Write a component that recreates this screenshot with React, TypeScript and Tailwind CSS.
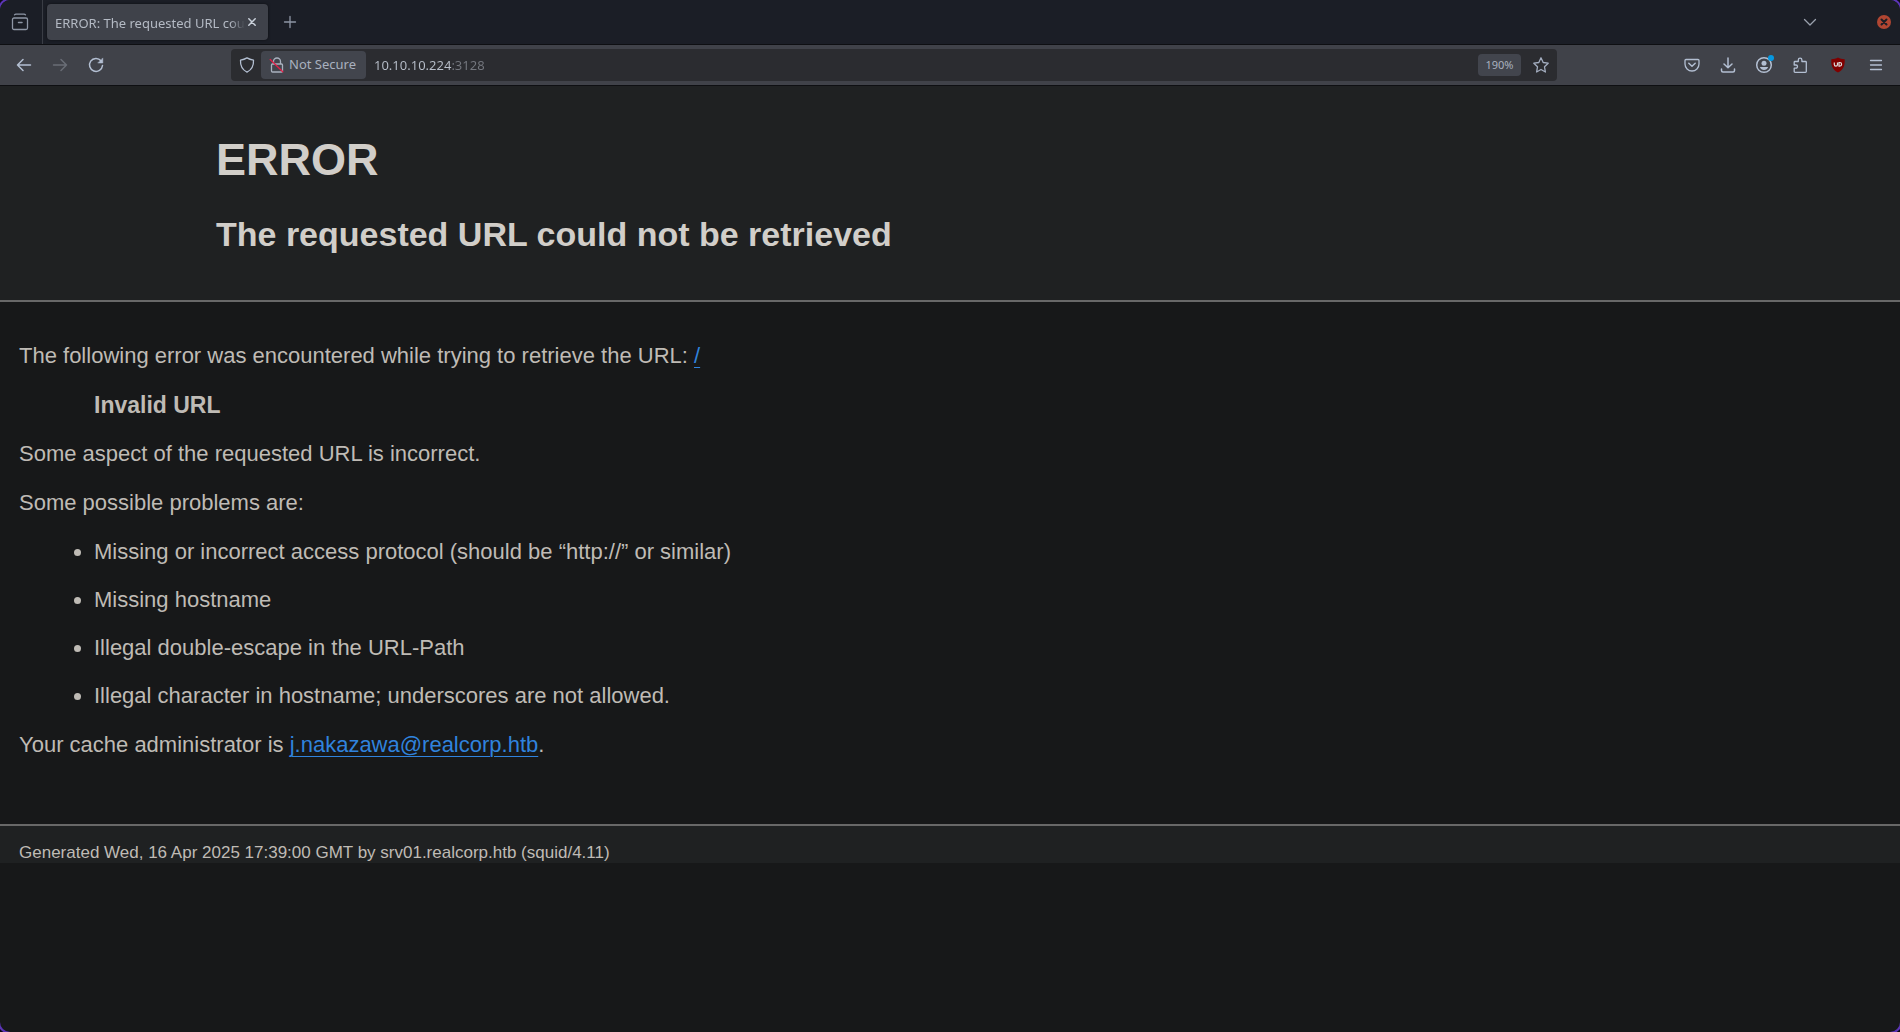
import type { ReactNode } from 'react';

const problems = [
  'Missing or incorrect access protocol (should be “http://” or similar)',
  'Missing hostname',
  'Illegal double-escape in the URL-Path',
  'Illegal character in hostname; underscores are not allowed.',
];

function Icon({ children, size = 16 }: { children: ReactNode; size?: number }) {
  return (
    <svg
      width={size}
      height={size}
      viewBox={`0 0 ${size} ${size}`}
      fill="none"
      stroke="currentColor"
      strokeWidth="1.3"
      strokeLinecap="round"
      strokeLinejoin="round"
      aria-hidden="true"
      className="shrink-0"
    >
      {children}
    </svg>
  );
}

function IconButton({ label, className = 'w-9', children }: { label: string; className?: string; children: ReactNode }) {
  return (
    <button type="button" aria-label={label} className={`flex h-8 items-center justify-center ${className}`}>
      {children}
    </button>
  );
}

function TabBar() {
  return (
    <div className="flex h-11 items-stretch bg-[#1b1e26]">
      <div className="flex w-[43px] items-center justify-center border-r border-[#3a3d45] text-[#8e96a5]">
        <button type="button" aria-label="View recent browsing" className="pr-0.5">
          <Icon size={18}>
            <path d="M3.500 1.800Q4 1.200 5 1.200h8q1 0 1.500.6" />
            <rect x="1.500" y="5" width="15" height="11.500" rx="1.500" />
            <path d="M7.500 9.500h3.500" strokeWidth="1.500" />
          </Icon>
        </button>
      </div>
      <div className="my-1 ml-1 flex w-[221px] items-center rounded bg-[#3f424a] pl-2 text-[#b4bac4] shadow-[0_0_3px_#0008]">
        <span className="w-[190px] overflow-hidden whitespace-nowrap pt-0.5 text-[13px] leading-5 [mask-image:linear-gradient(to_right,#000_92%,transparent)]">
          ERROR: The requested URL could not be retrieved
        </span>
        <button type="button" aria-label="Close tab" className="ml-[3px] text-[#cbd2dc]">
          <Icon size={8}>
            <path d="M.8.8l6.400 6.400M7.200.8L.8 7.200" strokeWidth="1.500" />
          </Icon>
        </button>
      </div>
      <IconButton label="New tab" className="ml-1 w-9 self-center text-[#8e96a5]">
        <Icon size={14}>
          <path d="M7 1.500v11M1.500 7h11" />
        </Icon>
      </IconButton>
      <div className="flex-1" />
      <IconButton label="List all tabs" className="w-9 self-center text-[#9aa1ad]">
        <Icon size={14}>
          <path d="M1.500 4.500L7 10l5.500-5.500" />
        </Icon>
      </IconButton>
      <IconButton label="Close window" className="ml-10 w-8 self-center">
        <svg width="14" height="14" viewBox="0 0 14 14" aria-hidden="true">
          <circle cx="7" cy="7" r="7" fill="#b04632" />
          <path d="M4.500 4.500l5 5m0-5l-5 5" stroke="#1b1e26" strokeWidth="2" strokeLinecap="round" />
        </svg>
      </IconButton>
    </div>
  );
}

function Toolbar() {
  return (
    <div className="flex h-[42px] items-center border-y border-[#0e0f12] bg-[#404249] px-1.5 text-[#b3bfd2]">
      <IconButton label="Back">
        <Icon>
          <path d="M14.500 8h-13M7 2.500L1.500 8 7 13.500" strokeWidth="1.500" />
        </Icon>
      </IconButton>
      <IconButton label="Forward" className="w-9 text-[#696d76]">
        <Icon>
          <path d="M1.500 8h13M9 2.500L14.500 8 9 13.500" strokeWidth="1.500" />
        </Icon>
      </IconButton>
      <IconButton label="Reload">
        <Icon>
          <path d="M13 3.700A6.500 6.500 0 1 0 14.500 8.500" strokeWidth="1.500" />
          <path d="M14.800 1.300v4.700H10.100z" fill="currentColor" strokeWidth=".5" />
        </Icon>
      </IconButton>
      <div className="min-w-4 max-w-[117px] flex-1" />
      <div className="flex h-8 w-[1326px] shrink items-center rounded bg-[#2b2c30]">
        <button type="button" aria-label="Tracking protection" className="flex w-[30px] justify-center pl-0.5">
          <Icon>
            <path d="M8 .9c2 1.300 4 1.900 6.500 2.200.3 5.400-1.800 9.700-6.500 12-4.700-2.300-6.800-6.600-6.500-12C4 2.800 6 2.200 8 .9z" />
          </Icon>
        </button>
        <button
          type="button"
          className="flex h-7 w-[105px] shrink-0 items-center gap-1 whitespace-nowrap rounded bg-[#42454d] pl-2 text-[13px] text-[#a9b1bf]"
        >
          <Icon>
            <path d="M4.500 7V4.500a3.500 3.500 0 0 1 7 0V7M4 7h8.500q1 0 1 1v6q0 1-1 1h-9q-1 0-1-1V8q0-1 1-1z" />
            <path d="M1.200 2.500l12.600 12.300" stroke="#e21f48" />
          </Icon>
          Not Secure
        </button>
        <input
          aria-label="Address"
          defaultValue="10.10.10.224:3128"
          className="ml-2 min-w-0 flex-1 bg-[linear-gradient(to_right,#b8bfca_78px,#74777e_78px)] bg-clip-text text-[13px] leading-5 text-transparent outline-none"
        />
        <button type="button" className="mr-2 h-[22px] w-[43px] shrink-0 rounded-sm bg-[#42454d] text-[11px] text-[#a9b1bf]">
          190%
        </button>
        <button type="button" aria-label="Bookmark this page" className="mr-1 flex w-6 justify-center text-[#a3adbf]">
          <Icon>
            <path d="M8 .8l2.200 4.700 5 .7-3.700 3.600.9 5.200L8 12.500 3.600 15l.9-5.200L.8 6.200l5-.7z" />
          </Icon>
        </button>
      </div>
      <div className="flex-1" />
      <IconButton label="Save to Pocket">
        <Icon>
          <path d="M2 2.500h12q1 0 1 1V7A7 7 0 0 1 1 7V3.500q0-1 1-1z" />
          <path d="M4.800 6.300L8 9.300l3.200-3" strokeWidth="1.500" />
        </Icon>
      </IconButton>
      <IconButton label="Downloads">
        <Icon>
          <path d="M8 1v9.500M4 7l4 3.800L12 7M1.500 12v1.500q0 1.500 1.500 1.500h10q1.500 0 1.500-1.500V12" strokeWidth="1.500" />
        </Icon>
      </IconButton>
      <IconButton label="Account">
        <Icon size={20}>
          <circle cx="10" cy="10" r="7.300" strokeWidth="1.500" />
          <circle cx="10" cy="8.300" r="2.500" fill="currentColor" stroke="none" />
          <path d="M5.800 12h8.400q-1.200 3-4.200 3t-4.200-3z" fill="currentColor" stroke="none" />
          <circle cx="17" cy="3" r="3" fill="#0698e0" stroke="none" />
        </Icon>
      </IconButton>
      <IconButton label="Extensions">
        <Icon>
          <path d="M6.300 4.500V3a1.800 1.800 0 0 1 3.600 0v1.500h3.600q.8 0 .8.800v9.200q0 .8-.8.800H3q-.8 0-.8-.8v-3.300h1.700a1.600 1.600 0 0 0 0-3.200H2.200V5.300q0-.8.800-.8z" />
        </Icon>
      </IconButton>
      <IconButton label="uBlock Origin" className="ml-0.5 w-9">
        <svg width="16" height="16" viewBox="0 0 16 16" aria-hidden="true">
          <path d="M8 .5c2 1.300 4 1.700 6.700 1.700C15 9 13.500 12.500 8 15.500 2.500 12.500 1 9 1.300 2.200 4 2.200 6 1.800 8 .5z" fill="#800000" />
          <path d="M4.300 5.500v2a1.600 1.600 0 0 0 3.200 0v-2M9 5.500v3.600h.8a1.800 1.800 0 0 0 0-3.600z" fill="none" stroke="#ddd" strokeWidth="1.200" />
        </svg>
      </IconButton>
      <IconButton label="Open application menu" className="ml-0.5 w-9">
        <Icon>
          <path d="M2.500 3.500h11M2.500 8h11M2.500 12.500h11" />
        </Icon>
      </IconButton>
    </div>
  );
}

export default function App() {
  return (
    <div className="min-h-screen bg-[#0d0b14]">
      <div className="flex min-h-screen flex-col overflow-hidden rounded-[10px] bg-[#171819] font-['Noto_Sans',sans-serif] shadow-[0_0_0_2px_#5b35b5]">
        <TabBar />
        <Toolbar />
        <main className="font-['Liberation_Sans',Arial,sans-serif] text-[#bfbbb5]">
          <header className="border-b-2 border-[#686868] bg-[#1f2122] pb-10 pl-[216px] pt-12 font-bold text-[#d1cec9]">
            <h1 className="text-[45px] leading-[52px]">ERROR</h1>
            <h2 className="mt-[22px] text-[34px] leading-[52px]">The requested URL could not be retrieved</h2>
          </header>
          <section className="flex flex-col gap-[23px] px-[19px] pb-[66px] pt-[41px] text-[22px] leading-[26px]">
            <p>
              The following error was encountered while trying to retrieve the URL:{' '}
              <a href="/" className="text-[#3083dd] underline decoration-1 underline-offset-4">
                /
              </a>
            </p>
            <blockquote className="pl-[75px] text-[23px] font-bold leading-[26px]">Invalid URL</blockquote>
            <p>Some aspect of the requested URL is incorrect.</p>
            <p>Some possible problems are:</p>
            <ul className="flex list-disc flex-col gap-[22px] pl-[75px]">
              {problems.map((problem) => (
                <li key={problem}>{problem}</li>
              ))}
            </ul>
            <p>
              Your cache administrator is{' '}
              <a href="mailto:j.nakazawa@realcorp.htb" className="text-[#3083dd] underline decoration-1 underline-offset-4">
                j.nakazawa@realcorp.htb
              </a>
              .
            </p>
          </section>
          <footer className="border-t-2 border-[#686868] bg-[#1f2122] px-[19px] pt-[17px] text-[17px] leading-5">
            Generated Wed, 16 Apr 2025 17:39:00 GMT by srv01.realcorp.htb (squid/4.11)
          </footer>
        </main>
      </div>
    </div>
  );
}
